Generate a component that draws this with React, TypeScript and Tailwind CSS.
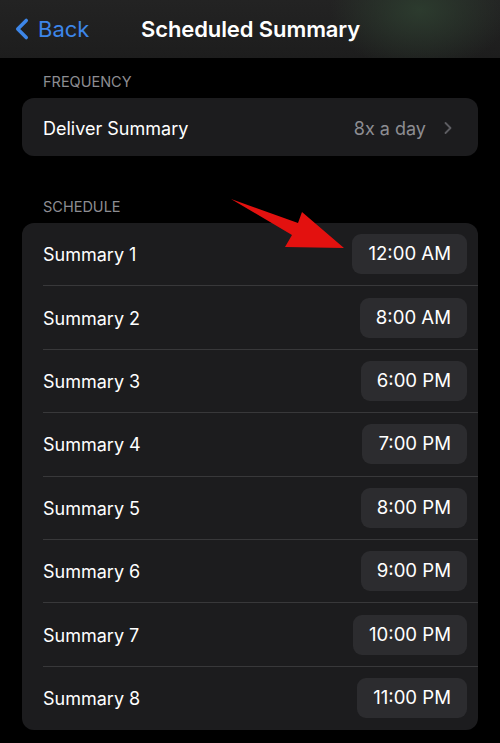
import { ChevronLeft, ChevronRight } from "lucide-react";

const summaries = [
  { label: "Summary 1", time: "12:00 AM" },
  { label: "Summary 2", time: "8:00 AM" },
  { label: "Summary 3", time: "6:00 PM" },
  { label: "Summary 4", time: "7:00 PM" },
  { label: "Summary 5", time: "8:00 PM" },
  { label: "Summary 6", time: "9:00 PM" },
  { label: "Summary 7", time: "10:00 PM" },
  { label: "Summary 8", time: "11:00 PM" },
];

const font = { fontFamily: "Inter, 'Noto Sans', sans-serif" };

export default function App() {
  return (
    <div className="relative w-[500px] h-[743px] bg-black overflow-hidden text-white" style={font}>
      {/* nav bar */}
      <div className="h-[58px] flex items-center bg-[radial-gradient(ellipse_90px_60px_at_420px_10px,#2c3b2e,transparent),linear-gradient(#232323,#1d1d1d)]">
        <div className="w-[141px] flex items-center pl-[5px] text-[#3d86e8]">
          <ChevronLeft size={34} strokeWidth={2.5} />
          <span className="text-[22px] -ml-[1px]">Back</span>
        </div>
        <div className="text-[22px] font-semibold tracking-[-0.1px]">Scheduled Summary</div>
      </div>

      {/* frequency */}
      <div className="px-[22px]">
        <div className="pl-[21px] pt-[15px] pb-[8px] text-[14.5px] text-[#8d8d92] leading-[17px]">FREQUENCY</div>
        <div className="h-[58px] rounded-[12px] bg-[#1c1c1e] flex items-center pl-[21px] pr-[20px] pt-[2px]">
          <span className="text-[18px] flex-1">Deliver Summary</span>
          <span className="text-[18px] text-[#8d8d92]">8x a day</span>
          <ChevronRight size={20} strokeWidth={2.2} className="text-[#5d5d62] ml-[12px]" />
        </div>

        <div className="pl-[21px] pt-[42px] pb-[8px] text-[14.5px] text-[#8d8d92] leading-[17px]">SCHEDULE</div>
        <div className="rounded-[12px] bg-[#1c1c1e] overflow-hidden">
          {summaries.map((s, i) => (
            <div key={s.label} className="pl-[21px]">
              <div
                className={
                  "h-[63.4px] flex items-center pr-[11px] " +
                  (i < summaries.length - 1 ? "border-b border-[#38383a]" : "")
                }
              >
                <span className="text-[18px] flex-1 pt-[1px]">{s.label}</span>
                <span className="h-[40px] px-[16px] rounded-[9px] bg-[#2c2c2f] flex items-center text-[18.6px]">
                  {s.time}
                </span>
              </div>
            </div>
          ))}
        </div>
      </div>

      {/* red arrow annotation */}
      <svg className="absolute left-0 top-0" width="500" height="743" viewBox="0 0 500 743">
        <polygon
          points="231,199 298,223 302,212 344,248 285,247 292,235"
          fill="#e3110f"
        />
      </svg>
    </div>
  );
}
